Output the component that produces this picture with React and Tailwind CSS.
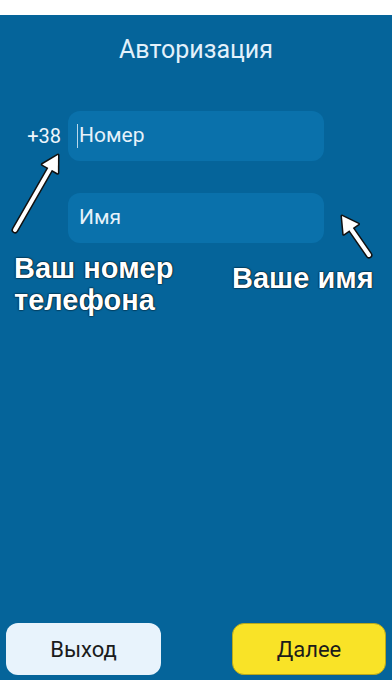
import React from "react";

const font = { fontFamily: "Roboto, 'Noto Sans', sans-serif" };

function Arrow({ x1, y1, x2, y2 }) {
  const dx = x2 - x1, dy = y2 - y1;
  const len = Math.hypot(dx, dy);
  const ux = dx / len, uy = dy / len;
  const px = -uy, py = ux;
  const hl = 16, hw = 9;
  const bx = x2 - ux * hl, by = y2 - uy * hl;
  const head = `${x2},${y2} ${bx + px * hw},${by + py * hw} ${bx - px * hw},${by - py * hw}`;
  return (
    <g>
      <line x1={x1} y1={y1} x2={bx + ux * 2} y2={by + uy * 2} stroke="#111" strokeWidth="7" strokeLinecap="round" />
      <polygon points={head} fill="#111" stroke="#111" strokeWidth="3" strokeLinejoin="round" />
      <line x1={x1} y1={y1} x2={bx + ux * 2} y2={by + uy * 2} stroke="#fff" strokeWidth="4" strokeLinecap="round" />
      <polygon points={head} fill="#fff" />
    </g>
  );
}

export default function App() {
  return (
    <div className="w-[392px] h-[696px] flex flex-col bg-white overflow-hidden" style={font}>
      <div className="h-[15px] bg-white" />
      <div className="relative flex-1 bg-[#05649a] flex flex-col">
        <div className="pt-[19px] text-center text-[25px] text-[#e3f1fb] leading-[32px]">Авторизация</div>
        <div className="mt-[45px] flex flex-col gap-[32px]">
          <div className="flex items-center">
            <div className="w-[68px] pr-[7px] text-right text-[20px] text-[#eef6fc]">+38</div>
            <div className="w-[256px] h-[50px] rounded-[12px] bg-[#0a71ab] flex items-center pl-[9px]">
              <span className="w-px h-[24px] bg-[#b9d7ea] mr-[1px]" />
              <span className="text-[21px] text-[#e6f2fa]">Номер</span>
            </div>
          </div>
          <div className="flex items-center">
            <div className="w-[68px]" />
            <div className="w-[256px] h-[50px] rounded-[12px] bg-[#0a71ab] flex items-center pl-[11px]">
              <span className="text-[21px] text-[#e6f2fa]">Имя</span>
            </div>
          </div>
        </div>
        <div className="flex-1" />
        <div className="flex justify-between px-[6px] pb-[5px]">
          <button className="w-[155px] h-[52px] rounded-[12px] bg-[#e8f3fc] text-[22px] text-[#1b1b1b]">Выход</button>
          <button className="w-[154px] h-[52px] rounded-[12px] bg-[#f9e327] text-[22px] text-[#1b1b1b] border border-[#b8a91c]">Далее</button>
        </div>

        <svg className="absolute left-0 top-0 pointer-events-none" width="392" height="400">
          <Arrow x1={15} y1={215} x2={58} y2={140} />
          <Arrow x1={369} y1={240} x2={342} y2={201} />
        </svg>
        <div
          className="absolute left-[14px] top-[237px] text-[29px] font-bold leading-[32px] text-white [text-shadow:0_0_2px_#000,0_0_1px_#000]"
          style={{ fontFamily: "Arial, 'Liberation Sans', sans-serif" }}
        >
          Ваш номер
          <br />
          телефона
        </div>
        <div
          className="absolute left-[232px] top-[247px] text-[29px] font-bold leading-[32px] text-white [text-shadow:0_0_2px_#000,0_0_1px_#000]"
          style={{ fontFamily: "Arial, 'Liberation Sans', sans-serif" }}
        >
          Ваше имя
        </div>
      </div>
      <div className="h-[16px] bg-white" />
    </div>
  );
}
